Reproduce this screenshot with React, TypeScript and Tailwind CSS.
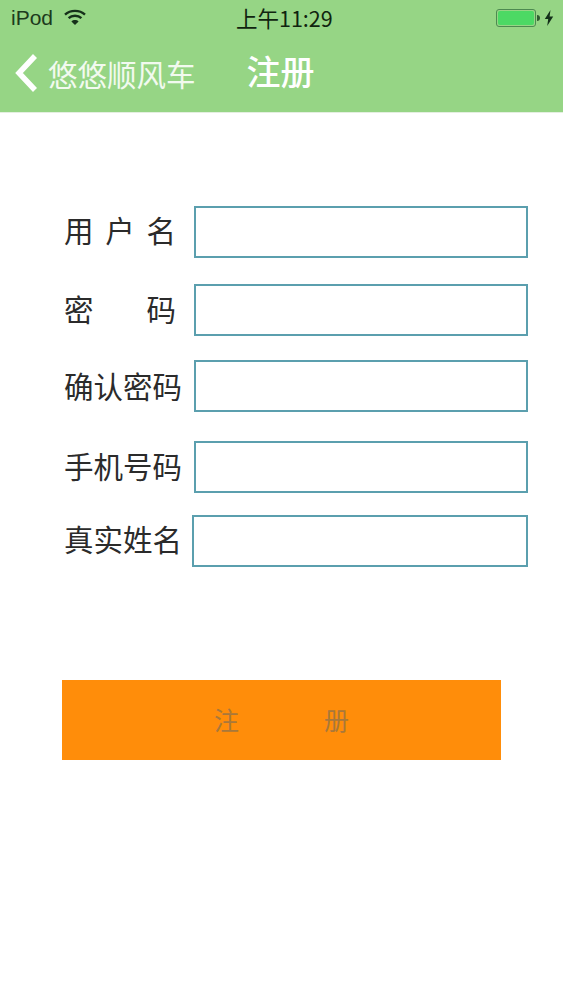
import React from 'react';

const cjk = 'font-["Noto_Sans_CJK_SC","Liberation_Sans",sans-serif]';

// Status bar icons
const Wifi = () => (
  <svg width="22" height="16" viewBox="0 0 22 16" className="ml-[11px] -mt-[2px]">
    <path d="M1 5.6 C6.5 0.6 15.5 0.6 21 5.6" fill="none" stroke="#16301a" strokeWidth="2.4" />
    <path d="M4.6 9.2 C8 6 14 6 17.4 9.2" fill="none" stroke="#16301a" strokeWidth="2.4" />
    <path d="M11 16 L7.4 12.4 C9.4 10.6 12.6 10.6 14.6 12.4 Z" fill="#16301a" />
  </svg>
);

const Battery = () => (
  <div className="flex items-center">
    <div className="w-[40px] h-[18px] rounded-[3px] border border-[#4d8a50] p-[1px]">
      <div className="w-full h-full rounded-[2px] bg-[#4cd964]" />
    </div>
    <div className="w-[3px] h-[6px] ml-[1px] rounded-r-sm bg-[#2e5a30]" />
    <svg width="10" height="16" viewBox="0 0 10 16" className="ml-[4px]">
      <path d="M6.5 0 L0.8 9 H4.2 L3.2 16 L9.2 6.6 H5.6 Z" fill="#14301a" />
    </svg>
  </div>
);

const Row = ({
  label,
  className,
  labelClass,
  inputClass,
}: {
  label: React.ReactNode;
  className: string;
  labelClass: string;
  inputClass?: string;
}) => (
  <div className={`flex items-center ${className}`}>
    <div className={`w-[130px] shrink-0 text-[29.5px] leading-[40px] text-[#2b2b2b] ${labelClass}`}>{label}</div>
    <div className={`h-[52px] border-2 border-[#5b9fae] bg-white ${inputClass ?? 'w-[334px]'}`} />
  </div>
);

const Spread = ({ chars }: { chars: string[] }) => (
  <div className="flex justify-between w-[112px]">
    {chars.map((c) => (
      <span key={c}>{c}</span>
    ))}
  </div>
);

export default function App() {
  return (
    <div className={`w-[563px] h-[1000px] bg-white overflow-hidden ${cjk}`}>
      <header className="h-[113px] bg-[#96d585] border-b border-[#e4efe0]">
        <div className="h-[36px] pl-[11px] pr-[9px] flex items-center justify-between relative">
          <div className="flex items-center text-[21px] text-[#1c3a1c] font-['Liberation_Sans',sans-serif]">
            iPod
            <Wifi />
          </div>
          <div className="absolute left-[236px] top-0 h-[36px] flex items-center text-[21.5px] text-[#10240f] whitespace-nowrap">
            上午11:29
          </div>
          <Battery />
        </div>
        <div className="flex items-center h-[74px] pl-[14px]">
          <svg width="24" height="38" viewBox="0 0 24 38">
            <path d="M21 2 L5 19 L21 36" fill="none" stroke="#fff" strokeWidth="5.5" />
          </svg>
          <span className="ml-[10px] text-[29.5px] leading-[40px] text-[#f2faef] whitespace-nowrap">悠悠顺风车</span>
          <span className="ml-[51px] -mt-[5px] text-[34px] leading-[40px] font-medium text-white whitespace-nowrap">注册</span>
        </div>
      </header>

      <main className="pl-[64px]">
        <Row className="mt-[93px]" labelClass="-mt-[6px]" label={<Spread chars={['用', '户', '名']} />} />
        <Row className="mt-[26px]" labelClass="-mt-[5px]" label={<Spread chars={['密', '码']} />} />
        <Row className="mt-[24px]" labelClass="-mt-[3px]" label="确认密码" />
        <Row className="mt-[29px]" labelClass="-mt-[5px]" label="手机号码" />
        <Row className="mt-[22px]" labelClass="-mt-[7px]" label="真实姓名" inputClass="-ml-[2px] w-[336px]" />
        <button className="-ml-[2px] mt-[113px] w-[439px] h-[80px] bg-[#ff8d0a] flex items-center justify-center gap-[85px] text-[25px] text-[#a9783a]">
          <span>注</span>
          <span>册</span>
        </button>
      </main>
    </div>
  );
}
